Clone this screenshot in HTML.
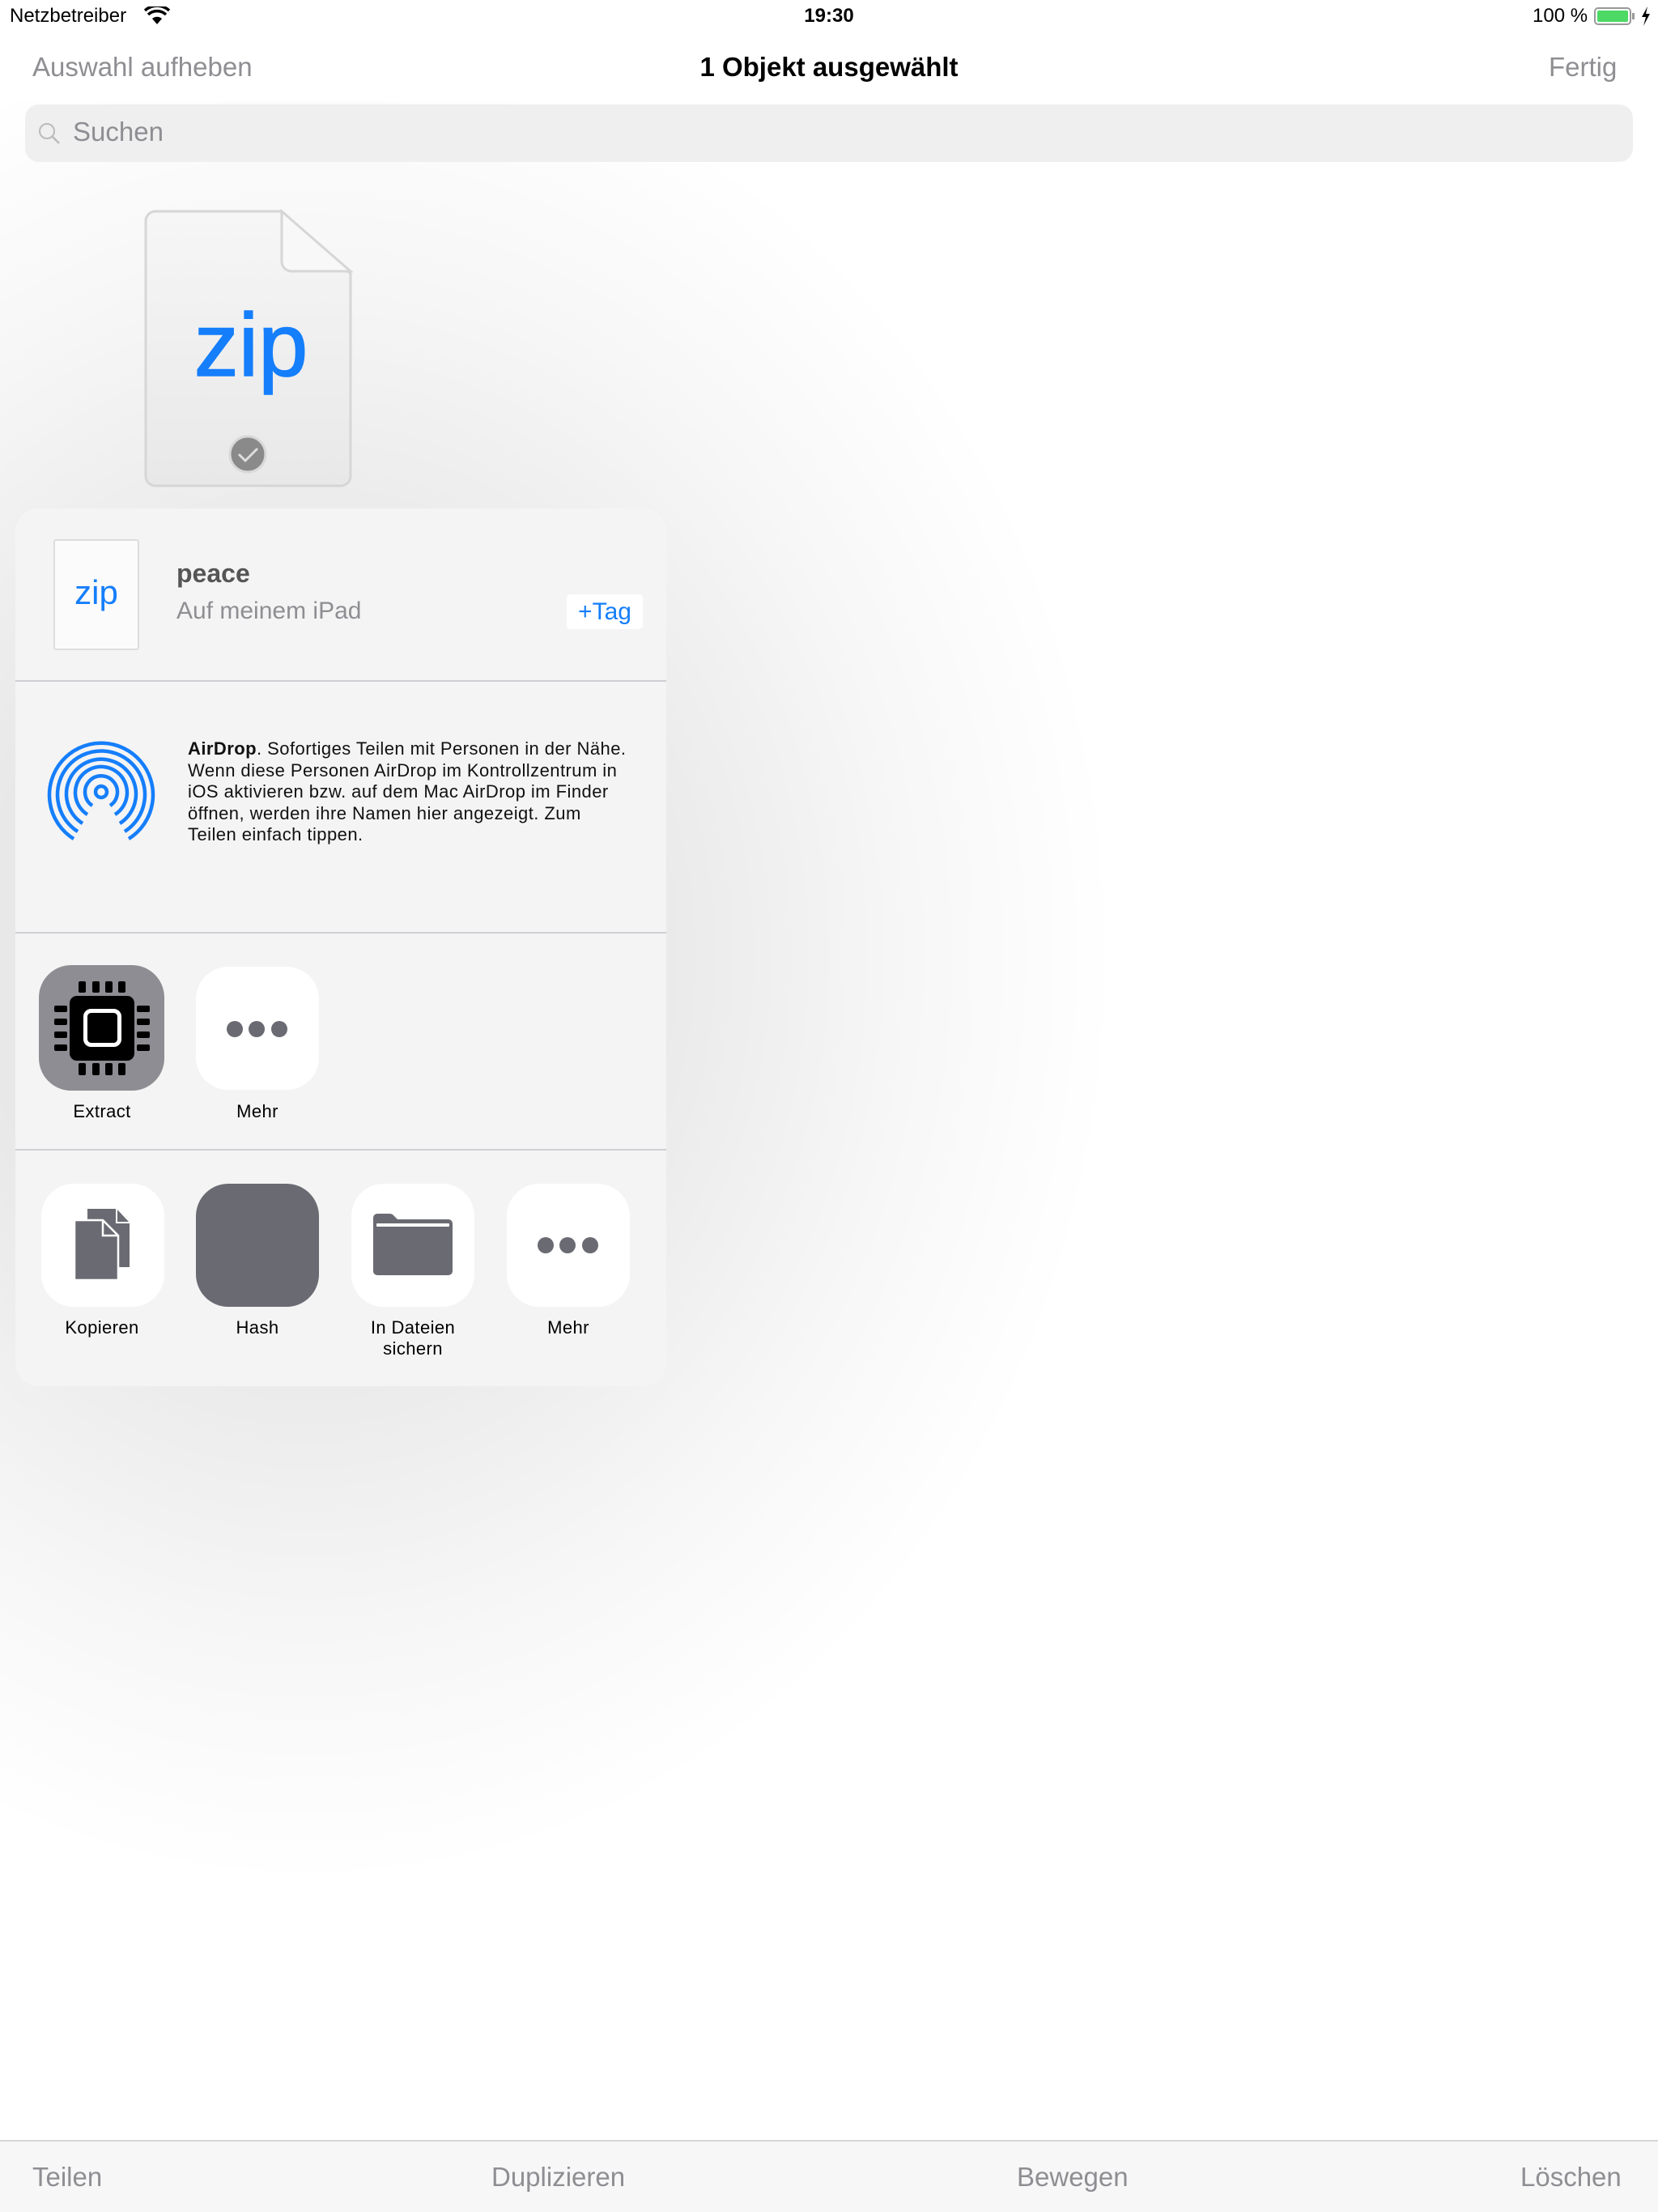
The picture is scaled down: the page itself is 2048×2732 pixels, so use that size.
<!DOCTYPE html>
<html><head><meta charset="utf-8">
<style>
*{margin:0;padding:0;box-sizing:border-box}
body{width:2048px;height:2732px;position:relative;overflow:hidden;background:#fff;font-family:"Liberation Sans",sans-serif;color:#000}
.abs{position:absolute}
.shade{position:absolute;left:0;top:0;width:2048px;height:2732px;background:radial-gradient(ellipse 1000px 1150px at 380px 1180px,rgba(0,0,0,.11) 0%,rgba(0,0,0,.09) 40%,rgba(0,0,0,.03) 75%,rgba(0,0,0,0) 100%)}
.nav{font-size:33px;color:#8e8e93}
.lbl{position:absolute;font-size:22px;text-align:center;width:200px;line-height:26px;color:#000;letter-spacing:.4px}
.ico{position:absolute;width:152px;height:152px;border-radius:40px;background:#fff}
</style></head><body>
<div class="shade"></div>
<div class="abs" style="left:0;top:0;width:2048px;height:125px;background:#fff"></div>
<div class="abs" style="left:12px;top:6px;font-size:24px">Netzbetreiber</div>
<svg class="abs" style="left:178px;top:8px" width="32" height="24" viewBox="0 0 32 24"><path d="M16 22 L10 15 A9 9 0 0 1 22 15 Z" fill="#000"/><path d="M5 10 A16 16 0 0 1 27 10" stroke="#000" stroke-width="3.5" fill="none"/><path d="M1 5 A22 22 0 0 1 31 5" stroke="#000" stroke-width="3.5" fill="none"/></svg>
<div class="abs" style="left:0;width:2048px;top:6px;text-align:center;font-size:24px;font-weight:bold">19:30</div>
<div class="abs" style="left:1893px;top:6px;font-size:24px">100 %</div>
<div class="abs" style="left:1969px;top:9px;width:46px;height:22px;border:2px solid #999;border-radius:5px;padding:2px"><div style="width:100%;height:100%;background:#4cd964;border-radius:2px"></div></div>
<div class="abs" style="left:2016px;top:16px;width:3px;height:8px;background:#999"></div>
<svg class="abs" style="left:2026px;top:8px" width="14" height="24" viewBox="0 0 14 24"><path d="M9 0 L2 13 H7 L4 24 L12 9 H7 Z" fill="#000"/></svg>

<div class="abs nav" style="left:40px;top:64px">Auswahl aufheben</div>
<div class="abs" style="left:0;width:2048px;top:64px;text-align:center;font-size:33px;font-weight:bold">1 Objekt ausgewählt</div>
<div class="abs nav" style="left:1913px;top:64px">Fertig</div>

<div class="abs" style="left:31px;top:129px;width:1986px;height:71px;border-radius:17px;background:#efeff0"></div>
<svg class="abs" style="left:46px;top:150px" width="30" height="30" viewBox="0 0 30 30"><circle cx="12" cy="12" r="9" stroke="#bbb" stroke-width="2" fill="none"/><path d="M19 19 L27 27" stroke="#bbb" stroke-width="2.5"/></svg>
<div class="abs" style="left:90px;top:144px;font-size:33px;color:#8e8e93">Suchen</div>

<!-- file icon -->
<svg class="abs" style="left:178px;top:258px" width="258" height="346" viewBox="0 0 258 346"><defs><linearGradient id="g" x1="0" y1="0" x2="0" y2="1"><stop offset="0" stop-color="#f6f6f6"/><stop offset="1" stop-color="#e8e8e8"/></linearGradient></defs><path d="M14 3 H170 L255 80 V330 A12 12 0 0 1 243 342 H14 A12 12 0 0 1 2 330 V15 A12 12 0 0 1 14 3Z" fill="url(#g)" stroke="#d6d6d6" stroke-width="3"/><path d="M170 3 V65 A12 12 0 0 0 182 77 H255 Z" fill="#f8f8f8" stroke="#d6d6d6" stroke-width="3"/><circle cx="128" cy="303" r="22" fill="#8a8a8a" stroke="#d8d8d8" stroke-width="3"/><path d="M117 303 L125 311 L140 296" stroke="#ddd" stroke-width="3" fill="none"/></svg>
<div class="abs" style="left:184px;width:252px;top:371px;text-align:center;font-size:110px;color:#157efb;line-height:112px;-webkit-text-stroke:1.5px #157efb">zip</div>

<!-- popover -->
<div class="abs" style="left:19px;top:628px;width:804px;height:1084px;border-radius:28px;background:#f4f4f4"></div>
<div class="abs" style="left:66px;top:666px;width:106px;height:137px;background:#fbfbfb;border:2px solid #ddd;border-radius:3px"></div>
<div class="abs" style="left:66px;width:106px;top:708px;text-align:center;font-size:42px;color:#157efb">zip</div>
<div class="abs" style="left:218px;top:690px;font-size:32px;font-weight:bold;color:#555">peace</div>
<div class="abs" style="left:218px;top:738px;font-size:30px;color:#8e8e93">Auf meinem iPad</div>
<div class="abs" style="left:700px;top:734px;width:94px;height:43px;background:#fff;border-radius:5px;font-size:30px;color:#157efb;text-align:center;line-height:43px">+Tag</div>
<div class="abs" style="left:19px;top:840px;width:804px;height:2px;background:#cfcfd4"></div>

<svg class="abs" style="left:57px;top:910px" width="136" height="136" viewBox="0 0 136 136">
<g fill="none" stroke="#157efb" stroke-width="4.5">
<path d="M34 126 A64 64 0 1 1 102 126"/><path d="M39 117 A54 54 0 1 1 97 117"/><path d="M45 107 A43 43 0 1 1 91 107"/><path d="M51 96 A32 32 0 1 1 85 96"/><path d="M57 85 A20 20 0 1 1 79 85"/><circle cx="68" cy="68" r="7"/></g></svg>
<div class="abs" style="left:232px;top:912px;font-size:22px;line-height:26.5px;white-space:nowrap;color:#111;letter-spacing:.45px"><b>AirDrop</b>. Sofortiges Teilen mit Personen in der Nähe.<br>Wenn diese Personen AirDrop im Kontrollzentrum in<br>iOS aktivieren bzw. auf dem Mac AirDrop im Finder<br>öffnen, werden ihre Namen hier angezeigt. Zum<br>Teilen einfach tippen.</div>
<div class="abs" style="left:19px;top:1151px;width:804px;height:2px;background:#cfcfd4"></div>

<!-- row 1 -->
<div class="ico" style="left:48px;top:1192px;width:155px;height:155px;background:#8d8d93"></div>
<svg class="abs" style="left:48px;top:1192px" width="155" height="155" viewBox="0 0 155 155">
<g fill="#000">
<rect x="38" y="38" width="80" height="80" rx="9"/>
<rect x="49" y="20" width="9" height="14" rx="2"/><rect x="66" y="20" width="9" height="14" rx="2"/><rect x="82" y="20" width="9" height="14" rx="2"/><rect x="98" y="20" width="9" height="14" rx="2"/>
<rect x="49" y="121" width="9" height="15" rx="2"/><rect x="66" y="121" width="9" height="15" rx="2"/><rect x="82" y="121" width="9" height="15" rx="2"/><rect x="98" y="121" width="9" height="15" rx="2"/>
<rect x="19" y="50" width="16" height="8" rx="2"/><rect x="19" y="66" width="16" height="8" rx="2"/><rect x="19" y="82" width="16" height="8" rx="2"/><rect x="19" y="98" width="16" height="8" rx="2"/>
<rect x="121" y="50" width="16" height="8" rx="2"/><rect x="121" y="66" width="16" height="8" rx="2"/><rect x="121" y="82" width="16" height="8" rx="2"/><rect x="121" y="98" width="16" height="8" rx="2"/>
</g>
<rect x="57.5" y="56.5" width="42" height="42" rx="7" fill="#000" stroke="#fff" stroke-width="5"/>
</svg>
<div class="ico" style="left:242px;top:1194px"></div>
<svg class="abs" style="left:242px;top:1194px" width="152" height="152" viewBox="0 0 152 152"><g fill="#6a6a72"><circle cx="48" cy="77" r="10"/><circle cx="75" cy="77" r="10"/><circle cx="103" cy="77" r="10"/></g></svg>
<div class="lbl" style="left:26px;top:1360px">Extract</div>
<div class="lbl" style="left:218px;top:1360px">Mehr</div>
<div class="abs" style="left:19px;top:1419px;width:804px;height:2px;background:#cfcfd4"></div>

<!-- row 2 -->
<div class="ico" style="left:51px;top:1462px"></div>
<svg class="abs" style="left:51px;top:1462px" width="152" height="152" viewBox="0 0 152 152">
<path d="M57 31 H93 L109 48 V103 H57Z" fill="#6a6a72"/><path d="M93 30 V48 H110" fill="none" stroke="#fff" stroke-width="2"/>
<path d="M41 45 H76 L95 64 V119 H41Z" fill="#6a6a72" stroke="#fff" stroke-width="2.5"/><path d="M76 45 V64 H95" fill="none" stroke="#fff" stroke-width="2.5"/></svg>
<div class="ico" style="left:242px;top:1462px;background:#6a6a72"></div>
<div class="ico" style="left:434px;top:1462px"></div>
<svg class="abs" style="left:434px;top:1462px" width="152" height="152" viewBox="0 0 152 152"><path d="M27 42 A5 5 0 0 1 32 37 H48 A6 6 0 0 1 52 39 L57 44 H120 A5 5 0 0 1 125 49 V108 A5 5 0 0 1 120 113 H32 A5 5 0 0 1 27 108Z" fill="#6a6a72"/><rect x="31" y="49" width="90" height="4" rx="1" fill="#fff"/></svg>
<div class="ico" style="left:626px;top:1462px"></div>
<svg class="abs" style="left:626px;top:1462px" width="152" height="152" viewBox="0 0 152 152"><g fill="#6a6a72"><circle cx="48" cy="76" r="10"/><circle cx="75" cy="76" r="10"/><circle cx="103" cy="76" r="10"/></g></svg>
<div class="lbl" style="left:26px;top:1627px">Kopieren</div>
<div class="lbl" style="left:218px;top:1627px">Hash</div>
<div class="lbl" style="left:410px;top:1627px">In Dateien<br>sichern</div>
<div class="lbl" style="left:602px;top:1627px">Mehr</div>

<!-- toolbar -->
<div class="abs" style="left:0;top:2643px;width:2048px;height:89px;background:#f7f7f7;border-top:2px solid #d8d8d8"></div>
<div class="abs nav" style="left:40px;top:2670px">Teilen</div>
<div class="abs nav" style="left:607px;top:2670px">Duplizieren</div>
<div class="abs nav" style="left:1256px;top:2670px">Bewegen</div>
<div class="abs nav" style="left:1878px;top:2670px">Löschen</div>
</body></html>
